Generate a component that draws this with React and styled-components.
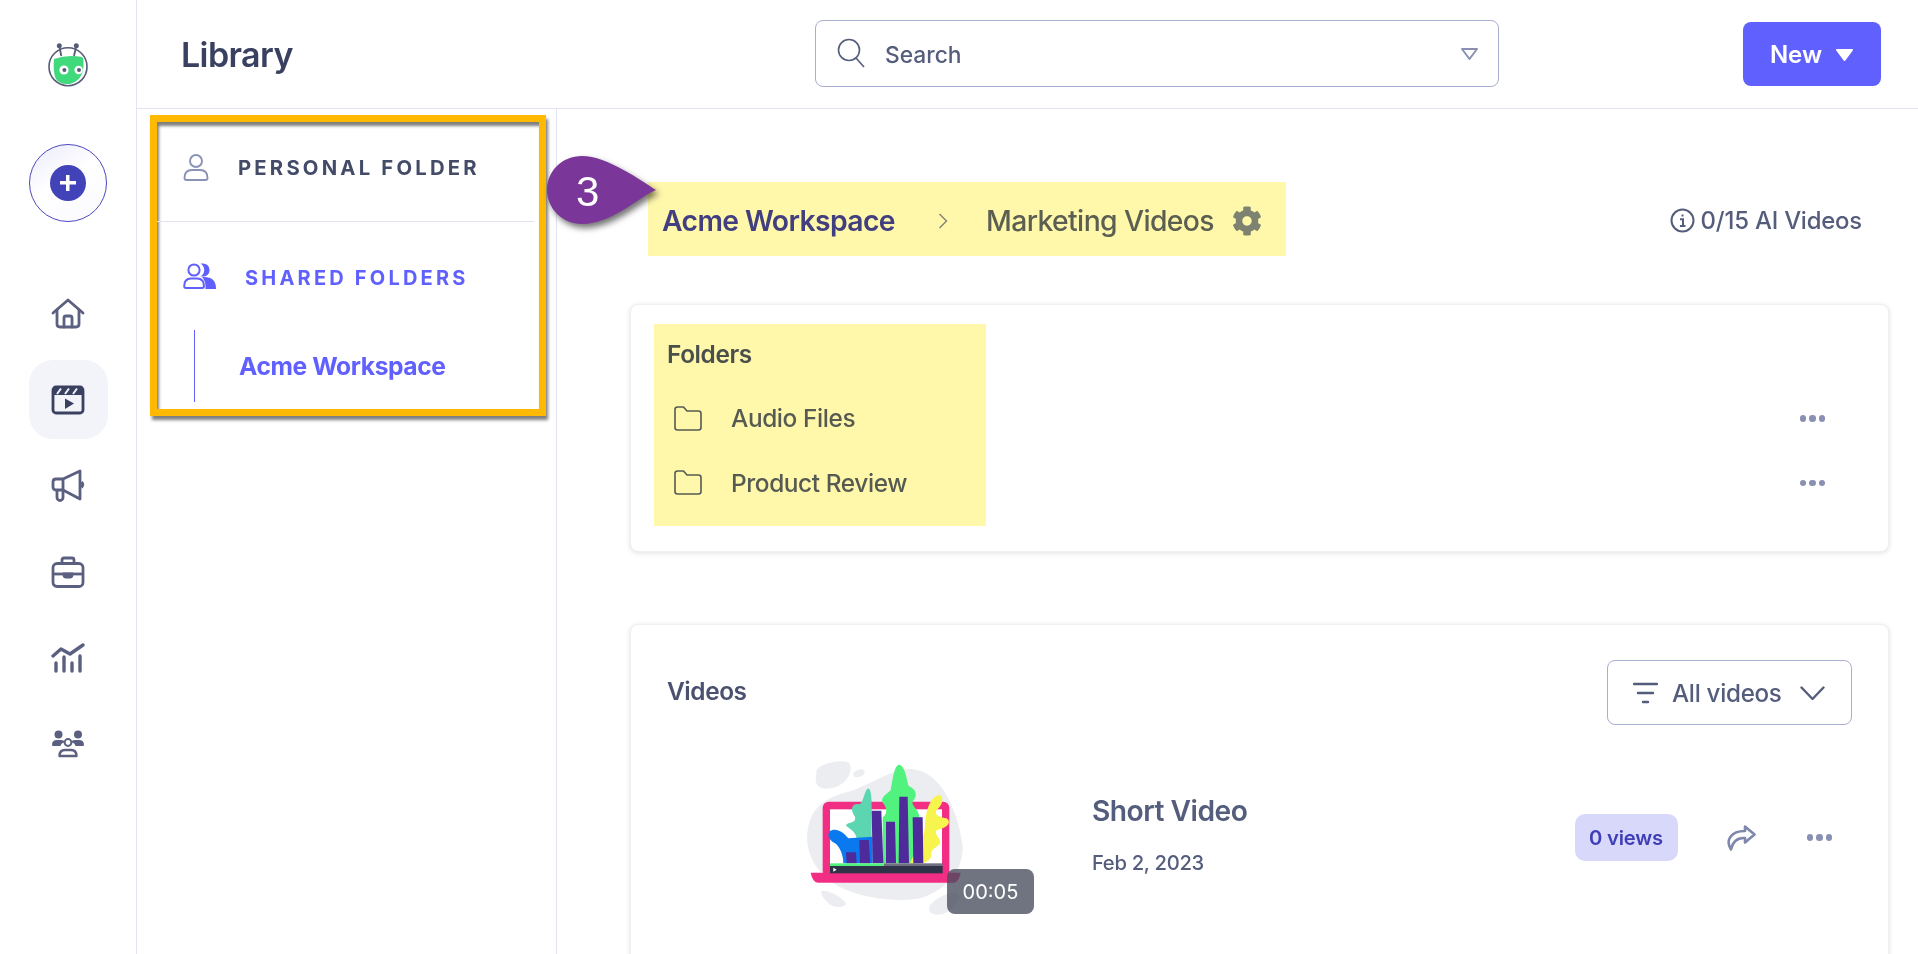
import React from 'react';
import styled, { createGlobalStyle } from 'styled-components';
import { FaCog } from 'react-icons/fa';

const GlobalStyle = createGlobalStyle`
  html, body, #root {
    height: 100%;
    margin: 0;
  }

  body {
    overflow: hidden;
    background: #fff;
    font-family: Inter, "Noto Sans", sans-serif;
    color: #555d7c;
  }

  * {
    box-sizing: border-box;
  }
`;

const Logo = () => (
  <svg width="48" height="48" viewBox="0 0 48 48">
    <circle cx="24" cy="24.7" r="19" fill="#fff" stroke="#565b78" strokeWidth="1.6" />
    <path d="M10 17Q24 12 38 15Q40 16 39.5 24Q39 38 26 42Q14 43 11 35Q9 27 10 17Z" fill="#40d97b" />
    <path d="M15.3 4L17.3 14M32.3 4L30 14" stroke="#565b78" strokeWidth="1.8" />
    <circle cx="15.3" cy="3.7" r="2.5" fill="#565b78" />
    <circle cx="32.3" cy="3.7" r="2.5" fill="#565b78" />
    <circle cx="20" cy="28" r="4.6" fill="#fff" />
    <circle cx="34.6" cy="28" r="4.2" fill="#fff" />
    <circle cx="20.4" cy="28" r="2" fill="#565b78" />
    <circle cx="35" cy="28" r="2" fill="#565b78" />
  </svg>
);

const HomeIcon = () => (
  <svg width="34" height="32" viewBox="0 0 34 32" fill="none" stroke="currentColor" strokeWidth="2.8" strokeLinecap="round" strokeLinejoin="round">
    <path d="M2 15L17 2L32 15" />
    <path d="M6 12V26Q6 29 9 29H25Q28 29 28 26V12" />
    <path d="M13 29V20Q13 18 15 18H19Q21 18 21 20V29" />
  </svg>
);

const ClapperIcon = () => (
  <svg width="34" height="30" viewBox="0 0 34 30" fill="none">
    <rect x="2" y="2" width="30" height="26" rx="3" stroke="currentColor" strokeWidth="2.8" />
    <rect x="2" y="2" width="30" height="8" fill="currentColor" />
    <path d="M6 9L10 3.5M14 9L18 3.5M22 9L26 3.5" stroke="#f3f4fa" strokeWidth="2" />
    <path d="M14 13.5L23 18.5L14 24Z" fill="currentColor" />
  </svg>
);

const MegaphoneIcon = () => (
  <svg width="34" height="33" viewBox="0 0 34 33" fill="none" stroke="currentColor" strokeWidth="2.8" strokeLinejoin="round">
    <path d="M12 10L29 2V30L12 21H5Q2 21 2 18V13Q2 10 5 10Z" />
    <path d="M12 10V21" />
    <path d="M6 21V28.5A3 3 0 0 0 12 28.5V21" />
    <path d="M30.5 13Q33 15.5 30.5 18.5" />
  </svg>
);

const BriefcaseIcon = () => (
  <svg width="34" height="32" viewBox="0 0 34 32" fill="none" stroke="currentColor" strokeWidth="2.8">
    <rect x="2" y="7.5" width="30" height="23" rx="4" />
    <path d="M11 7V4Q11 2 13 2H21Q23 2 23 4V7" />
    <path d="M2 18H32" />
    <path d="M13 18H21V19Q21 21 19 21H15Q13 21 13 19Z" fill="currentColor" />
  </svg>
);

const ChartIcon = () => (
  <svg width="34" height="30" viewBox="0 0 34 30" fill="none" stroke="currentColor" strokeWidth="3.4" strokeLinecap="round" strokeLinejoin="round">
    <path d="M2 13L10 6L19 11L32 2" />
    <path d="M5 20V28M13 14V28M21 20V28M29 13V28" />
  </svg>
);

const TeamIcon = () => (
  <svg width="34" height="28" viewBox="0 0 34 28">
    <circle cx="7.5" cy="4.5" r="4" fill="currentColor" />
    <circle cx="27" cy="4.5" r="4" fill="currentColor" />
    <path d="M1 15Q1 10 6 10H10Q13 10 14 12Q10 13 9.5 16H2Q1 16 1 15Z" fill="currentColor" />
    <path d="M33 15Q33 10 28 10H24Q21 10 20 12Q24 13 24.5 16H32Q33 16 33 15Z" fill="currentColor" />
    <circle cx="17" cy="12.5" r="3.4" fill="none" stroke="currentColor" strokeWidth="2" />
    <path d="M8.5 26Q8.5 20 14 20H20Q25.5 20 25.5 26Z" fill="none" stroke="currentColor" strokeWidth="2.4" strokeLinejoin="round" />
  </svg>
);

const PersonIcon = () => (
  <svg width="26" height="27" viewBox="0 0 26 27" fill="none" stroke="#8a93b5" strokeWidth="1.9">
    <circle cx="13" cy="7" r="6" />
    <path d="M1.5 24Q1.5 16 9 16H17Q24.5 16 24.5 24Q24.5 26 22.5 26H3.5Q1.5 26 1.5 24Z" />
  </svg>
);

const PeopleIcon = () => (
  <svg width="33" height="26" viewBox="0 0 33 26" fill="none" stroke="#6060ff" strokeWidth="2">
    <circle cx="11" cy="7" r="5.6" />
    <path d="M20 1.4A5.6 5.6 0 0 1 20 12.6A8 8 0 0 0 20 1.4Z" fill="#6060ff" />
    <path d="M1.2 23Q1.2 15.5 8 15.5H14Q21 15.5 21 23Q21 25 19 25H3Q1.2 25 1.2 23Z" />
    <path d="M21 15Q31.8 15 32 25H23.5Q24 19 21 15Z" fill="#6060ff" />
  </svg>
);

const SearchIcon = () => (
  <svg width="29" height="31" viewBox="0 0 29 31" fill="none" stroke="#555d7c" strokeWidth="1.6">
    <circle cx="12" cy="12" r="10.5" />
    <path d="M19 20L27 29" />
  </svg>
);

const SearchCaret = () => (
  <svg width="19" height="14" viewBox="0 0 19 14" fill="none" stroke="#8a90b3" strokeWidth="2" strokeLinejoin="round">
    <path d="M2 2H17L9.5 12Z" />
  </svg>
);

const NewCaret = () => (
  <svg width="19" height="12" viewBox="0 0 19 12">
    <path d="M2 1H17L9.5 11Z" fill="#fff" stroke="#fff" strokeWidth="2" strokeLinejoin="round" />
  </svg>
);

const CrumbChevron = () => (
  <svg width="10" height="16" viewBox="0 0 10 16" fill="none" stroke="#7f8376" strokeWidth="1.4">
    <path d="M1.5 1L8.5 8L1.5 15" />
  </svg>
);

const InfoIcon = () => (
  <svg width="25" height="25" viewBox="0 0 25 25" fill="none" stroke="#555d7c" strokeWidth="2">
    <circle cx="12.5" cy="12.5" r="11" />
    <path d="M12.5 6.6V8.6M10 11.2H13V18M10 18H15.5" />
  </svg>
);

const FolderIcon = () => (
  <svg width="28" height="25" viewBox="0 0 28 25" fill="none" stroke="#555d7c" strokeWidth="1.6" strokeLinejoin="round">
    <path d="M1 3.5Q1 1 3.5 1H9.5L13 5H24.5Q27 5 27 7.5V21.5Q27 24 24.5 24H3.5Q1 24 1 21.5Z" />
  </svg>
);

const FilterIcon = () => (
  <svg width="25" height="22" viewBox="0 0 25 22" fill="none" stroke="#555d7c" strokeWidth="2.4" strokeLinecap="round">
    <path d="M1 2H24M5 11H20M10 20H15" />
  </svg>
);

const ChevronDown = () => (
  <svg width="25" height="15" viewBox="0 0 25 15" fill="none" stroke="#555d7c" strokeWidth="2.4" strokeLinecap="round" strokeLinejoin="round">
    <path d="M1.5 1.5L12.5 13L23.5 1.5" />
  </svg>
);

const ShareIcon = () => (
  <svg width="30" height="26" viewBox="0 0 30 26" fill="none" stroke="#7f88ac" strokeWidth="2.6" strokeLinejoin="round">
    <path d="M19 1.5L28.5 9.5L19 17.5V13C12 12.5 7 15 5 24.5C-1 15 5 6 19 6Z" />
  </svg>
);

const Thumbnail = () => (
  <svg width="320" height="224" viewBox="0 0 960 672">
    <g fill="#ecedf0">
      <path d="M250 190C330 170 400 110 460 118C560 130 600 280 608 350C610 420 560 480 480 505C400 520 280 500 220 460C160 420 130 350 145 290C155 240 190 205 250 190Z" />
      <path d="M170 120C180 100 250 85 268 100C280 120 262 160 230 170C200 180 170 180 167 150Z" />
      <ellipse cx="297" cy="130" rx="18" ry="11" transform="rotate(-20 297 130)" />
      <path d="M185 482C210 480 250 505 258 520C255 535 220 535 205 520C190 505 180 490 185 482Z" />
      <path d="M510 525C530 505 570 480 595 490C605 510 580 540 550 552C520 558 500 550 510 525Z" />
    </g>
    <rect x="188" y="215" width="380" height="225" rx="18" fill="#f22e84" />
    <rect x="210" y="238" width="336" height="170" fill="#fff" />
    <path d="M152 428H602Q596 458 580 458H175Q158 458 152 428Z" fill="#f22e84" />
    <path d="M325 175C335 180 335 210 335 240V330H290C290 300 260 295 258 285C265 275 290 280 285 260C270 240 275 220 295 222C310 228 312 180 325 175Z" fill="#5bd6b0" />
    <path d="M418 104C436 108 440 150 446 168C472 178 472 200 458 214C452 226 478 240 478 262V400H368V262C385 250 380 230 368 218C360 200 385 190 392 180C398 150 402 105 418 104Z" fill="#52f27f" />
    <path d="M208 305C225 290 250 305 265 325L338 320V400H250C250 370 235 345 225 340C210 330 200 320 208 305Z" fill="#0a78ef" />
    <path d="M540 195C552 205 548 225 530 240C520 255 540 262 560 265C575 275 565 295 530 300C520 315 545 325 540 340C530 355 512 355 514 375C510 400 490 400 450 400C455 380 490 340 495 290C495 250 510 195 540 195Z" fill="#f7f54d" />
    <g fill="#4e2a9b">
      <path d="M258 367H288L290 400H260Z" />
      <path d="M298 330H326L331 400H300Z" />
      <path d="M335 242H364L370 400H338Z" />
      <path d="M378 275H405L408 400H378Z" />
      <path d="M418 200H443L447 400H416Z" />
      <path d="M458 262H488L490 400H460Z" />
    </g>
    <rect x="210" y="400" width="162" height="8" fill="#52f27f" />
    <rect x="372" y="400" width="176" height="8" fill="#6f7080" />
    <rect x="210" y="408" width="338" height="22" fill="#2f3347" />
    <path d="M220 413L230 419L220 425Z" fill="#fff" />
  </svg>
);

const Page = styled.div`
  display: flex;
  height: 100%;
`;

const Rail = styled.nav`
  flex: 0 0 137px;
  display: flex;
  flex-direction: column;
  align-items: center;
  padding-top: 42px;
  border-right: 1px solid #e2e3f4;
`;

const CreateButton = styled.div`
  width: 78px;
  height: 78px;
  margin-top: 54px;
  margin-bottom: 52px;
  display: flex;
  align-items: center;
  justify-content: center;
  border: 1.5px solid #4b48bf;
  border-radius: 50%;
  background: linear-gradient(150deg, #ebebfd 0%, #fff 45%, #fafaff 100%);
`;

const CreateDot = styled.span`
  width: 36px;
  height: 36px;
  display: flex;
  align-items: center;
  justify-content: center;
  border-radius: 50%;
  background: #4343b9;
  color: #fff;

  &::before {
    content: '';
    width: 16px;
    height: 16px;
    background:
      linear-gradient(#fff, #fff) center / 100% 3.5px no-repeat,
      linear-gradient(#fff, #fff) center / 3.5px 100% no-repeat;
  }
`;

const RailItems = styled.div`
  display: flex;
  flex-direction: column;
  gap: 7px;
`;

const RailItem = styled.a`
  width: 79px;
  height: 79px;
  display: flex;
  align-items: center;
  justify-content: center;
  border-radius: 24px;
  background: ${p => (p.$active ? '#f3f4fa' : 'transparent')};
  color: ${p => (p.$active ? '#3a4160' : '#5b6080')};
`;

const Main = styled.div`
  flex: 1;
  min-width: 0;
  display: flex;
  flex-direction: column;
`;

const TopBar = styled.header`
  flex: 0 0 109px;
  display: flex;
  align-items: center;
  padding: 0 37px 1px 44px;
  border-bottom: 1px solid #e2e3f4;
`;

const Title = styled.h1`
  flex: 0 0 634px;
  margin: 0;
  padding-top: 2px;
  font-size: 34px;
  font-weight: 600;
  letter-spacing: -0.6px;
  color: #3a4160;
`;

const Search = styled.div`
  width: 684px;
  height: 67px;
  display: flex;
  align-items: center;
  padding: 0 19px 0 21px;
  border: 1px solid #a9adcf;
  border-radius: 8px;
  font-size: 22.8px;
  font-weight: 500;
  color: #555d7c;
`;

const SearchText = styled.span`
  flex: 1;
  margin-left: 19px;
  padding-top: 1px;
`;

const NewButton = styled.button`
  width: 138px;
  height: 64px;
  margin-left: auto;
  display: flex;
  align-items: center;
  justify-content: center;
  gap: 13px;
  padding: 2px 0 0;
  border: 0;
  border-radius: 8px;
  background: #6060ff;
  color: #fff;
  font-family: inherit;
  font-size: 24px;
  font-weight: 600;
`;

const Body = styled.div`
  flex: 1;
  min-height: 0;
  display: flex;
  overflow: hidden;
`;

const Side = styled.aside`
  flex: 0 0 420px;
  padding: 6px 0 0 13px;
  border-right: 1px solid #e2e3f4;
`;

const Callout = styled.div`
  width: 396px;
  height: 301px;
  padding-left: 26px;
  border: 7px solid #ffb900;
  box-shadow:
    2px 4px 3px rgba(0, 0, 0, 0.5),
    inset 2px 4px 3px rgba(0, 0, 0, 0.5);
`;

const SideRow = styled.div`
  display: flex;
  align-items: center;
  height: ${p => p.$height}px;
  padding-bottom: ${p => p.$lift}px;
`;

const PersonalLabel = styled.span`
  margin-left: 29px;
  font-size: 20.3px;
  font-weight: 700;
  letter-spacing: 3.2px;
  color: #434b68;
`;

const SharedLabel = styled(PersonalLabel)`
  padding-top: 4px;
  font-size: 20px;
  color: #6060ff;
`;

const SideDivider = styled.div`
  height: 1px;
  margin: 0 5px 0 -26px;
  background: #e2e3f0;
`;

const SideLink = styled.a`
  display: flex;
  align-items: center;
  height: 72px;
  margin: 0 0 0 11px;
  padding-left: 44px;
  border-left: 1.5px solid #6060ff;
  font-size: 24.6px;
  font-weight: 700;
  letter-spacing: -0.4px;
  color: #6060ff;
`;

const Content = styled.main`
  flex: 1;
  min-width: 0;
  padding: 73px 29px 0 73px;
`;

const CrumbRow = styled.div`
  display: flex;
  align-items: center;
  justify-content: space-between;
  height: 74px;
  padding: 0 27px 0 18px;
`;

const Crumbs = styled.div`
  position: relative;
  width: 638px;
  height: 74px;
  display: flex;
  align-items: center;
  padding: 3px 0 0 14px;
  background: #fff8ab;
`;

const CrumbRoot = styled.span`
  width: 233px;
  font-size: 28.3px;
  font-weight: 600;
  letter-spacing: -0.6px;
  color: #423f80;
  white-space: nowrap;
`;

const CrumbChevronBox = styled.span`
  display: flex;
  margin: 0 38px 0 43px;
`;

const CrumbCurrent = styled.span`
  width: 228px;
  font-size: 28.3px;
  font-weight: 500;
  letter-spacing: -0.6px;
  color: #5a5f52;
  white-space: nowrap;
`;

const GearBox = styled.span`
  display: flex;
  margin-left: 18px;
  font-size: 30px;
  color: #7e8270;
`;

const StepBadge = styled.div`
  position: absolute;
  left: -101px;
  top: -26px;
  width: 109px;
  height: 68px;
  display: flex;
  align-items: center;
  padding-left: 29px;
  font-family: "Liberation Sans", Arial, sans-serif;
  font-size: 42px;
  color: #fff;

  svg {
    position: absolute;
    left: 0;
    top: 0;
    filter: drop-shadow(3px 4px 3px rgba(0, 0, 0, 0.55));
  }

  span {
    position: relative;
    top: 2px;
  }
`;

const Quota = styled.div`
  display: flex;
  align-items: center;
  gap: 6px;
  padding-top: 3px;
  font-size: 23.9px;
  font-weight: 500;
  letter-spacing: -0.2px;
  color: #555d7c;
`;

const Card = styled.section`
  position: relative;
  border: 1px solid #efeff3;
  border-radius: 8px;
  background: #fff;
  box-shadow: 0 1px 5px rgba(40, 40, 70, 0.14);
`;

const FolderCard = styled(Card)`
  height: 248px;
  margin-top: 48px;
  padding: 24px 63px 0 36px;
`;

const FolderMark = styled.div`
  position: absolute;
  left: 23px;
  top: 19px;
  width: 332px;
  height: 202px;
  background: #fff8ab;
  mix-blend-mode: multiply;
`;

const SectionTitle = styled.h2`
  margin: 0;
  font-size: 24.4px;
  font-weight: 600;
  letter-spacing: -0.4px;
  color: #4a5170;
`;

const FolderTitle = styled(SectionTitle)`
  height: 50px;
  display: flex;
  align-items: center;
  margin: 0 0 7px 0;
`;

const FolderRow = styled.div`
  height: 64.5px;
  display: flex;
  align-items: center;
  padding-left: 7px;
  font-size: 24.4px;
  font-weight: 500;
  letter-spacing: -0.4px;
  color: #555d7c;
`;

const FolderName = styled.span`
  flex: 1;
  margin-left: 29px;
`;

const Dots = styled.span`
  display: flex;
  gap: 3px;

  i {
    width: 6.5px;
    height: 6.5px;
    border-radius: 50%;
    background: #8a90b3;
  }
`;

const VideoCard = styled(Card)`
  margin-top: 72px;
  height: 500px;
`;

const VideoHead = styled.div`
  height: 105px;
  display: flex;
  align-items: flex-end;
  justify-content: space-between;
  padding: 0 36px 0 36px;
`;

const VideoLabel = styled(SectionTitle)`
  align-self: flex-start;
  margin-top: 51px;
`;

const FilterButton = styled.button`
  width: 245px;
  height: 65px;
  margin-bottom: 5px;
  display: flex;
  align-items: center;
  gap: 14px;
  padding: 1px 26px 0 25px;
  border: 1px solid #a9adcf;
  border-radius: 8px;
  background: #fff;
  font-family: inherit;
  font-size: 24.2px;
  font-weight: 500;
  letter-spacing: -0.3px;
  color: #555d7c;
`;

const FilterText = styled.span`
  flex: 1;
  text-align: left;
`;

const VideoRow = styled.div`
  display: flex;
  padding-left: 129px;
`;

const ThumbBox = styled.div`
  position: relative;
  width: 320px;
  height: 224px;
`;

const Duration = styled.span`
  position: absolute;
  left: 187px;
  top: 139px;
  width: 87px;
  height: 45px;
  display: flex;
  align-items: center;
  justify-content: center;
  border-radius: 8px;
  background: rgba(72, 76, 92, 0.78);
  font-size: 20px;
  color: #fff;
`;

const VideoInfo = styled.div`
  flex: 1;
  margin-left: 12px;
  padding-top: 64px;
`;

const VideoName = styled.div`
  font-size: 28.2px;
  font-weight: 600;
  letter-spacing: -0.5px;
  color: #555d7c;
`;

const VideoDate = styled.div`
  margin-top: 22px;
  font-size: 20.2px;
  font-weight: 500;
  letter-spacing: -0.3px;
  color: #555d7c;
`;

const VideoActions = styled.div`
  display: flex;
  align-items: center;
  height: 47px;
  margin-top: 84px;
  margin-right: 56px;
`;

const Views = styled.span`
  width: 103px;
  height: 47px;
  margin-left: 1px;
  display: flex;
  align-items: center;
  justify-content: center;
  border-radius: 10px;
  background: #d8d8fb;
  font-size: 20.2px;
  font-weight: 600;
  letter-spacing: -0.2px;
  color: #3f3fb5;
`;

const ShareBox = styled.span`
  display: flex;
  margin: 0 51px 0 48px;
`;

const railIcons = [
  { key: 'home', icon: <HomeIcon /> },
  { key: 'videos', icon: <ClapperIcon />, active: true },
  { key: 'campaigns', icon: <MegaphoneIcon /> },
  { key: 'portfolio', icon: <BriefcaseIcon /> },
  { key: 'analytics', icon: <ChartIcon /> },
  { key: 'team', icon: <TeamIcon /> }
];

const folders = ['Audio Files', 'Product Review'];

const MoreDots = () => (
  <Dots>
    <i />
    <i />
    <i />
  </Dots>
);

const App = () => (
  <>
    <GlobalStyle />
    <Page>
      <Rail>
        <Logo />
        <CreateButton>
          <CreateDot />
        </CreateButton>
        <RailItems>
          {railIcons.map(item => (
            <RailItem key={item.key} $active={item.active}>
              {item.icon}
            </RailItem>
          ))}
        </RailItems>
      </Rail>
      <Main>
        <TopBar>
          <Title>Library</Title>
          <Search>
            <SearchIcon />
            <SearchText>Search</SearchText>
            <SearchCaret />
          </Search>
          <NewButton>
            New
            <NewCaret />
          </NewButton>
        </TopBar>
        <Body>
          <Side>
            <Callout>
              <SideRow $height={99} $lift={8}>
                <PersonIcon />
                <PersonalLabel>PERSONAL FOLDER</PersonalLabel>
              </SideRow>
              <SideDivider />
              <SideRow $height={108} $lift={0}>
                <PeopleIcon />
                <SharedLabel>SHARED FOLDERS</SharedLabel>
              </SideRow>
              <SideLink>Acme Workspace</SideLink>
            </Callout>
          </Side>
          <Content>
            <CrumbRow>
              <Crumbs>
                <StepBadge>
                  <svg width="109" height="68" viewBox="0 0 109 68">
                    <path d="M35 0C60 0 95 25 109 34C90 42 65 68 35 68C15 68 0 52 0 34C0 15 15 0 35 0Z" fill="#7b3699" />
                  </svg>
                  <span>3</span>
                </StepBadge>
                <CrumbRoot>Acme Workspace</CrumbRoot>
                <CrumbChevronBox>
                  <CrumbChevron />
                </CrumbChevronBox>
                <CrumbCurrent>Marketing Videos</CrumbCurrent>
                <GearBox>
                  <FaCog />
                </GearBox>
              </Crumbs>
              <Quota>
                <InfoIcon />
                0/15 AI Videos
              </Quota>
            </CrumbRow>
            <FolderCard>
              <FolderTitle>Folders</FolderTitle>
              {folders.map(name => (
                <FolderRow key={name}>
                  <FolderIcon />
                  <FolderName>{name}</FolderName>
                  <MoreDots />
                </FolderRow>
              ))}
              <FolderMark />
            </FolderCard>
            <VideoCard>
              <VideoHead>
                <VideoLabel>Videos</VideoLabel>
                <FilterButton>
                  <FilterIcon />
                  <FilterText>All videos</FilterText>
                  <ChevronDown />
                </FilterButton>
              </VideoHead>
              <VideoRow>
                <ThumbBox>
                  <Thumbnail />
                  <Duration>00:05</Duration>
                </ThumbBox>
                <VideoInfo>
                  <VideoName>Short Video</VideoName>
                  <VideoDate>Feb 2, 2023</VideoDate>
                </VideoInfo>
                <VideoActions>
                  <Views>0 views</Views>
                  <ShareBox>
                    <ShareIcon />
                  </ShareBox>
                  <MoreDots />
                </VideoActions>
              </VideoRow>
            </VideoCard>
          </Content>
        </Body>
      </Main>
    </Page>
  </>
);

export default App;
